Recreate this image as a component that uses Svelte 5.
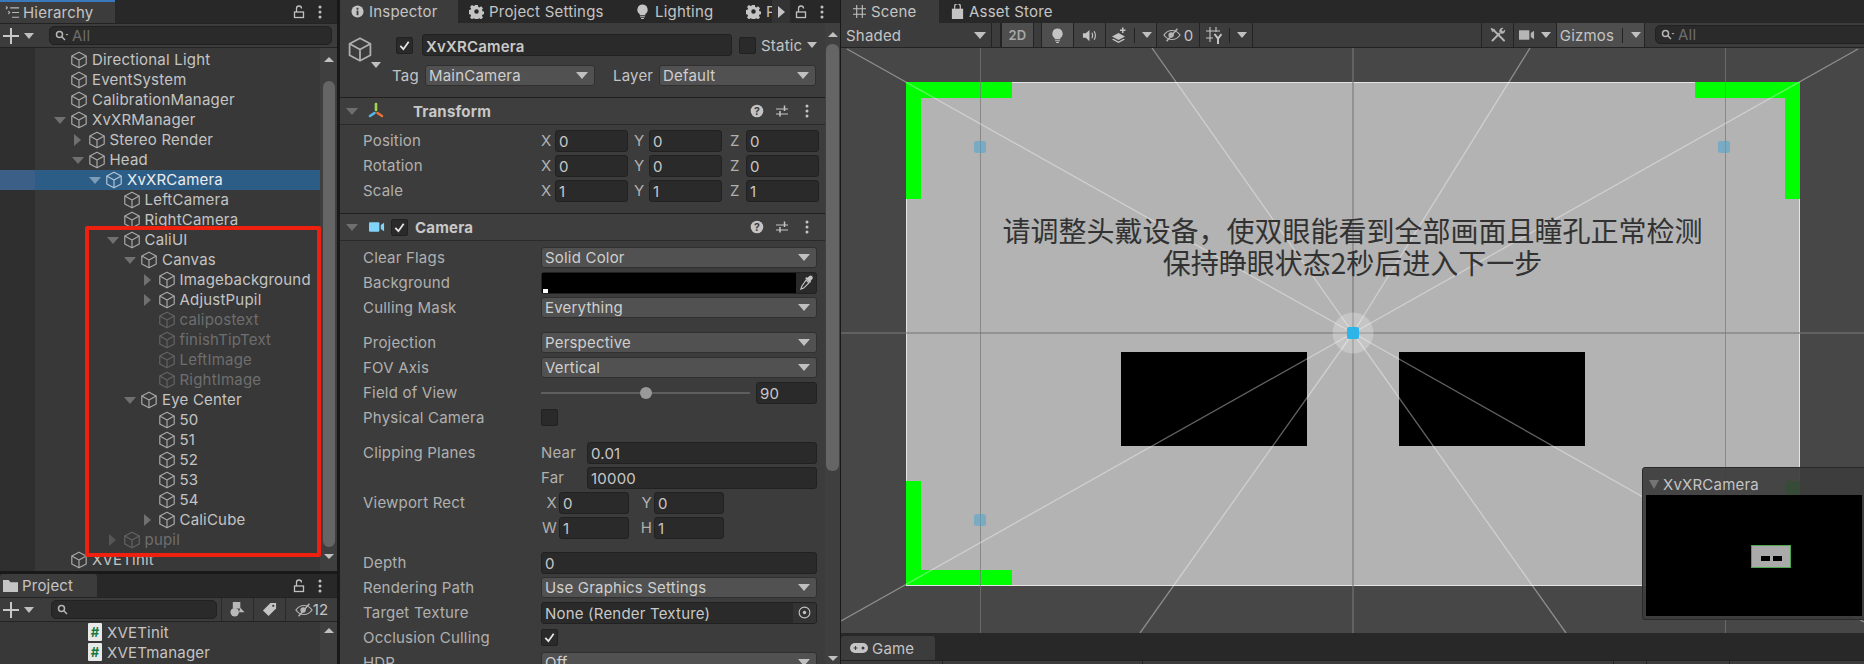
<script>
  const tree = [
    ['Directional Light', 0, ''], ['EventSystem', 0, ''], ['CalibrationManager', 0, ''],
    ['XvXRManager', 0, 'd'], ['Stereo Render', 1, 'r'], ['Head', 1, 'd'],
    ['XvXRCamera', 2, 'd', 'sel'], ['LeftCamera', 3, ''], ['RightCamera', 3, ''],
    ['CaliUI', 3, 'd'], ['Canvas', 4, 'd'], ['Imagebackground', 5, 'r'], ['AdjustPupil', 5, 'r'],
    ['calipostext', 5, '', 'dim'], ['finishTipText', 5, '', 'dim'], ['LeftImage', 5, '', 'dim'], ['RightImage', 5, '', 'dim'],
    ['Eye Center', 4, 'd'], ['50', 5, ''], ['51', 5, ''], ['52', 5, ''], ['53', 5, ''], ['54', 5, ''],
    ['CaliCube', 5, 'r'], ['pupil', 3, 'r', 'dim'], ['XVETinit', 0, '']
  ];
  const transform = [['Position', '0', '0', '0'], ['Rotation', '0', '0', '0'], ['Scale', '1', '1', '1']];
  const center = [1353, 333];
  const rays = [[847, 49], [1858, 49], [841, 621], [1864, 622], [1152, 48], [1530, 48], [1140, 633], [1566, 633]];
  const gridX = [980, 1725];
  const dots = [[980, 147], [1724, 147], [980, 520]];
  const corners = [
    [906, 82, 106, 16], [906, 82, 15, 117], [1695, 82, 105, 16], [1785, 82, 15, 117],
    [906, 481, 15, 104], [906, 570, 106, 15], [1785, 481, 15, 104], [1695, 570, 105, 15]
  ];
</script>

{#snippet cube(cls)}
  <svg class={cls} viewBox="0 0 18 18" fill="none" stroke="currentColor" stroke-width="1.2" stroke-linejoin="round">
    <path d="M9 1.2 16.2 5v8L9 16.8 1.8 13V5z" />
    <path d="M1.8 5 9 9l7.2-4M9 9v7.8" />
  </svg>
{/snippet}
{#snippet lock()}
  <svg class="ico14" viewBox="0 0 14 14" fill="none" stroke="#c0c0c0" stroke-width="1.3">
    <rect x="2.5" y="7" width="9" height="5.5" /><path d="M4.5 7V3.5a2.5 2.5 0 0 1 5 0" />
  </svg>
{/snippet}
{#snippet dotsv()}
  <svg class="ico14" viewBox="0 0 14 14" fill="#c0c0c0"><circle cx="7" cy="2" r="1.5" /><circle cx="7" cy="7" r="1.5" /><circle cx="7" cy="12" r="1.5" /></svg>
{/snippet}
{#snippet gear()}
  <svg class="ico15" viewBox="0 0 16 16" fill="#c4c4c4">
    <path fill-rule="evenodd" d="M6.6 1h2.8l.4 2 1.3.6 1.8-1.1 2 2-1.1 1.8.6 1.3 2 .4v2.8l-2 .4-.6 1.3 1.1 1.8-2 2-1.8-1.1-1.3.6-.4 2H6.6l-.4-2-1.3-.6-1.8 1.1-2-2 1.1-1.8-.6-1.3-2-.4V6.6l2-.4.6-1.3-1.1-1.8 2-2 1.8 1.1 1.3-.6zM8 5.6a2.4 2.4 0 1 0 0 4.8 2.4 2.4 0 0 0 0-4.8z" />
  </svg>
{/snippet}
{#snippet bulb()}
  <svg class="ico15" viewBox="0 0 16 16" fill="#c4c4c4"><path d="M8 .5a5.5 5.5 0 0 0-3 10.1V12h6v-1.4A5.5 5.5 0 0 0 8 .5zM5.5 13h5v1.2h-5zM6.5 14.8h3V16h-3z" /></svg>
{/snippet}
{#snippet plus()}
  <span class="plus"><svg viewBox="0 0 16 16" fill="#c8c8c8"><path d="M7 0h2v7h7v2H9v7H7V9H0V7h7z" /></svg><i class="tri small"></i></span>
{/snippet}
{#snippet lens(more)}
  <svg class="lens" viewBox="0 0 14 12" fill="none" stroke="#b5b5b5" stroke-width="1.5">
    <circle cx="4.5" cy="4.5" r="3" /><path d="M6.8 6.8 10 10" />
    {#if more}<path d="M10.5 4h3l-1.5 1.6z" fill="#b5b5b5" stroke="none" />{/if}
  </svg>
{/snippet}
{#snippet eyeoff()}
  <svg class="eye" viewBox="0 0 20 14" fill="none" stroke="#b5b5b5" stroke-width="1.3">
    <path d="M1 7c2.400-3.500 5.400-5 9-5s6.600 1.500 9 5c-2.400 3.500-5.400 5-9 5S3.400 10.500 1 7z" />
    <circle cx="9" cy="7" r="2.400" fill="#b5b5b5" /><path d="M16 0 4 14" stroke-width="1.600" />
  </svg>
{/snippet}
{#snippet tools()}
  <svg class="ico16" viewBox="0 0 16 16" fill="none" stroke="#b4b4b4" stroke-linecap="round">
    <path d="M3.500 3 14 13.500" stroke-width="2" />
    <path d="M1.500 1.500 4.500 2.800 2.800 4.500z" fill="#b4b4b4" stroke-width="1" />
    <path d="M9.500 6.500 2.500 13.500" stroke-width="2" />
    <path d="M9.300 4.800a3.300 3.300 0 0 1 4.200-3.800l-2 2 1.500 1.500 2-2a3.300 3.300 0 0 1-3.800 4.200z" fill="#b4b4b4" stroke="none" />
  </svg>
{/snippet}
{#snippet headIcons()}
  <div class="head-icons">
    <svg class="ico14" viewBox="0 0 14 14"><circle cx="7" cy="7" r="6.300" fill="#c4c4c4" /><text x="7" y="10.600" class="qm">?</text></svg>
    <svg class="ico14" viewBox="0 0 14 14" fill="none" stroke="#c4c4c4" stroke-width="1.200"><path d="M1 5h12M1 10h12" /><path d="M9.500 1.500V7M5 7v5.500" stroke-width="1.500" /></svg>
    <svg class="ico14" viewBox="0 0 14 14" fill="#c4c4c4"><circle cx="7" cy="2" r="1.500" /><circle cx="7" cy="7" r="1.500" /><circle cx="7" cy="12" r="1.500" /></svg>
  </div>
{/snippet}
{#snippet drop(text)}
  <div class="drop"><span>{text}</span><i class="tri"></i></div>
{/snippet}
{#snippet check(on)}
  <span class="chk">{#if on}<svg viewBox="0 0 14 14" fill="none" stroke="#e8e8e8" stroke-width="1.900"><path d="M2.500 7.500 5.800 11 11.500 3" /></svg>{/if}</span>
{/snippet}
{#snippet scroll(cls)}
  <div class="sb {cls}"><i class="tri up"></i><div class="thumb"></div><i class="tri"></i></div>
{/snippet}

<div class="app">
  <section class="left">
    <div class="hier">
      <div class="tabs">
        <div class="tab hier-tab">
          <svg class="ico15" viewBox="0 0 16 16" fill="none" stroke="#b8b8b8" stroke-width="1.200"><path d="M5.500 3H15M7.500 8H15M7.500 13H15M1 1.500l1.500 1.500L1 4.500M3.500 6.500l1.500 1.500-1.500 1.500" /></svg>
          <span>Hierarchy</span>
        </div>
        <div class="tab-right">{@render lock()}{@render dotsv()}</div>
      </div>
      <div class="bar">
        {@render plus()}
        <div class="search s-hier">{@render lens(true)}<span>All</span></div>
      </div>
      <div class="tree-wrap">
        <div class="tree">
          {#each tree as [name, depth, arrow, flag]}
            <div class="row" class:sel={flag === 'sel'} class:dim={flag === 'dim'} style:padding-left="{51 + 17.5 * depth}px">
              <span class="arrow">{#if arrow}<i class={arrow === 'd' ? 'tri' : 'tri right'}></i>{/if}</span>
              {@render cube('cube')}
              <span class="name">{name}</span>
            </div>
          {/each}
        </div>
        {@render scroll('sb-tree')}
        <div class="redbox"></div>
      </div>
    </div>
    <div class="proj">
      <div class="tabs">
        <div class="tab proj-tab">
          <svg class="ico15" viewBox="0 0 16 16" fill="#c4c4c4"><path d="M0 2h6l2 2.500h8V15H0z" /></svg>
          <span>Project</span>
        </div>
        <div class="tab-right">{@render lock()}{@render dotsv()}</div>
      </div>
      <div class="bar proj-bar">
        {@render plus()}
        <div class="search s-proj">{@render lens(false)}</div>
        <div class="pbtn">
          <svg class="ico15" viewBox="0 0 16 16" fill="#b8b8b8"><rect x="3" y="0" width="8" height="7" /><circle cx="5" cy="11" r="4.500" /><path d="M11 6l4.500 5h-6z" /></svg>
        </div>
        <div class="pbtn">
          <svg class="ico15" viewBox="0 0 16 16" fill="#c4c4c4"><path d="M9 1h6v6l-8 8-6-6z" /><circle cx="12" cy="4" r="1.200" fill="#3c3c3c" /></svg>
        </div>
        <div class="pbtn wide">{@render eyeoff()}<span>12</span></div>
      </div>
      <div class="files">
        <div class="file-list">
          {#each ['XVETinit', 'XVETmanager'] as f}
            <div class="file"><span class="doc">#</span><span>{f}</span></div>
          {/each}
        </div>
        <div class="sb sb-files"><i class="tri up"></i></div>
      </div>
    </div>
  </section>

  <section class="insp">
    <div class="tabs">
      <div class="tab insp-tab">
        <svg class="ico13" viewBox="0 0 14 14"><circle cx="7" cy="7" r="6.500" fill="#c4c4c4" /><rect x="6" y="6" width="2" height="5" fill="#3c3c3c" /><rect x="6" y="3" width="2" height="2" fill="#3c3c3c" /></svg>
        <span>Inspector</span>
      </div>
      <div class="tab plain t-settings">{@render gear()}<span>Project Settings</span></div>
      <div class="tab plain t-light">{@render bulb()}<span>Lighting</span></div>
      <div class="tab plain t-p">{@render gear()}<span>P</span></div>
      <div class="tab-more"><i class="tri right bright"></i></div>
      <div class="tab-right narrow">{@render lock()}{@render dotsv()}</div>
    </div>
    <div class="insp-body">
      <div class="insp-content">
        <div class="obj">
          <div class="obj-icon">
            {@render cube('cube-big')}
            <i class="tri small"></i>
          </div>
          <div class="obj-rows">
            <div class="obj-top">
              {@render check(true)}
              <div class="field name-field">XvXRCamera</div>
              <span class="chk"></span>
              <span class="static">Static</span><i class="tri small"></i>
            </div>
            <div class="obj-bot">
              <span class="tag-label">Tag</span>
              <div class="d-tag">{@render drop('MainCamera')}</div>
              <span class="layer-label">Layer</span>
              <div class="d-layer">{@render drop('Default')}</div>
            </div>
          </div>
        </div>
        <div class="chead">
          <i class="tri dark"></i>
          <svg class="tf-icon" viewBox="0 0 18 18" fill="none" stroke-width="2.600" stroke-linecap="round">
            <path d="M9 2v6" stroke="#a2d64c" /><path d="M7.500 11 3 14" stroke="#55b8e8" /><path d="M10.500 11l4.500 3" stroke="#e8703a" />
          </svg>
          <span class="ctitle tf">Transform</span>
          {@render headIcons()}
        </div>
        <div class="props p-tf">
          {#each transform as [label, x, y, z]}
            <div class="prop">
              <span class="lbl">{label}</span>
              <div class="xyz">
                <span class="ax">X</span><div class="field">{x}</div>
                <span class="ax">Y</span><div class="field">{y}</div>
                <span class="ax">Z</span><div class="field">{z}</div>
              </div>
            </div>
          {/each}
        </div>
        <div class="chead cam">
          <i class="tri dark"></i>
          <svg class="cam-icon" viewBox="0 0 17 12"><rect x="0" y="1" width="11" height="10" rx="1" fill="#80d4fa" /><path d="M12.500 4 16 1.500v9L12.500 8z" fill="#80d4fa" /></svg>
          {@render check(true)}
          <span class="ctitle">Camera</span>
          {@render headIcons()}
        </div>
        <div class="props">
          <div class="prop"><span class="lbl">Clear Flags</span>{@render drop('Solid Color')}</div>
          <div class="prop">
            <span class="lbl">Background</span>
            <div class="color"><div class="swatch"><i></i></div>
              <svg class="ico15" viewBox="0 0 16 16" fill="#c4c4c4"><path d="M10.500 1.500c1-1 2.500-1.200 3.500-.2s.8 2.500-.2 3.500l-1.600 1.600.8.8-1.400 1.400-5-5L8 2.200l.8.8z" /><path d="M7.500 5.500l3 3L5 14l-3 1 1-3z" fill="none" stroke="#c4c4c4" stroke-width="1.200" /></svg>
            </div>
          </div>
          <div class="prop"><span class="lbl">Culling Mask</span>{@render drop('Everything')}</div>
          <div class="gap"></div>
          <div class="prop"><span class="lbl">Projection</span>{@render drop('Perspective')}</div>
          <div class="prop"><span class="lbl">FOV Axis</span>{@render drop('Vertical')}</div>
          <div class="prop">
            <span class="lbl">Field of View</span>
            <div class="slider"><div class="track"></div><div class="knob"></div></div>
            <div class="field f-fov">90</div>
          </div>
          <div class="prop"><span class="lbl">Physical Camera</span>{@render check(false)}</div>
          <div class="gap"></div>
          <div class="prop">
            <span class="lbl">Clipping Planes</span>
            <span class="np">Near</span><div class="field grow">0.01</div>
          </div>
          <div class="prop">
            <span class="lbl"></span>
            <span class="np">Far</span><div class="field grow">10000</div>
          </div>
          <div class="prop">
            <span class="lbl">Viewport Rect</span>
            <div class="vp"><span class="ax vx">X</span><div class="field">0</div><span class="ax vy">Y</span><div class="field">0</div></div>
          </div>
          <div class="prop">
            <span class="lbl"></span>
            <div class="vp"><span class="ax vx">W</span><div class="field">1</div><span class="ax vy">H</span><div class="field">1</div></div>
          </div>
          <div class="gap"></div>
          <div class="prop"><span class="lbl">Depth</span><div class="field grow">0</div></div>
          <div class="prop"><span class="lbl">Rendering Path</span>{@render drop('Use Graphics Settings')}</div>
          <div class="prop">
            <span class="lbl">Target Texture</span>
            <div class="field grow objf"><span>None (Render Texture)</span>
              <b class="pick"><svg class="ico13" viewBox="0 0 14 14" fill="none" stroke="#c4c4c4" stroke-width="1.200"><circle cx="7" cy="7" r="5.800" /><circle cx="7" cy="7" r="1.800" fill="#c4c4c4" stroke="none" /></svg></b>
            </div>
          </div>
          <div class="prop"><span class="lbl">Occlusion Culling</span>{@render check(true)}</div>
          <div class="prop"><span class="lbl">HDR</span>{@render drop('Off')}</div>
        </div>
      </div>
      {@render scroll('sb-insp')}
    </div>
  </section>

  <section class="scene">
    <div class="tabs">
      <div class="tab scene-tab">
        <svg class="ico13" viewBox="0 0 14 14" fill="none" stroke="#c0c0c0" stroke-width="1.200"><path d="M4 0v14M10 0v14M0 4h14M0 10h14" /></svg>
        <span>Scene</span>
      </div>
      <div class="tab plain t-store">
        <svg class="ico15" viewBox="0 0 14 16" fill="#c4c4c4"><path d="M1 5h12v11H1z" /><path d="M4 6V2.500a3 3 0 0 1 6 0V6" fill="none" stroke="#c4c4c4" stroke-width="1.300" /></svg>
        <span>Asset Store</span>
      </div>
    </div>
    <div class="scene-bar">
      <div class="sbtn shaded"><span>Shaded</span><i class="tri"></i></div>
      <div class="sgap"></div>
      <div class="sbtn lit b2d">2D</div>
      <div class="sgap sm"></div>
      <div class="sbtn lit bicon">{@render bulb()}</div>
      <div class="sbtn bicon lit2">
        <svg class="ico15" viewBox="0 0 16 16" fill="#c4c4c4" ><path d="M1 5.500h3L8 2v12l-4-3.500H1z" /><path d="M10.500 5c1 1.800 1 4.200 0 6M13 3.500c1.600 2.800 1.600 6.200 0 9" fill="none" stroke="#c4c4c4" stroke-width="1.200" /></svg>
      </div>
      <div class="sbtn bfx lit2">
        <svg class="ico16" viewBox="0 0 16 16" fill="#c4c4c4"><path d="M1 9.500 7.500 6 14 9.500 7.500 13zM1 12.500l1.500-.8 5 2.700 5-2.700 1.500.8-6.500 3.500zM11 .500h1.500V2.500h2V4h-2v2H11V4H9V2.500h2z" /></svg>
        <em class="vr"></em><i class="tri small"></i>
      </div>
      <div class="sbtn bhid">{@render eyeoff()}<span>0</span></div>
      <div class="sbtn bgrid">
        <svg class="gridy" viewBox="0 0 16 17" fill="none" stroke="#c4c4c4" stroke-width="1.100"><path d="M4 0v15M10 0v5M0 4h14M0 11h7" /><path d="M8.500 7 12 11.500l3.500-4.500M12 11.500V17" stroke-width="2" /></svg>
        <em class="vr"></em><i class="tri small"></i>
      </div>
      <div class="spring"></div>
      <div class="sbtn btool">{@render tools()}</div>
      <div class="sbtn bcam">
        <svg class="camg" viewBox="0 0 17 12" fill="#b5b5b5"><rect y="1" width="11" height="10" /><path d="M12.500 4 16 1.500v9L12.500 8z" /></svg>
        <i class="tri small"></i>
      </div>
      <div class="sbtn lit bgiz"><span>Gizmos</span><em class="vr"></em><i class="tri small"></i></div>
      <div class="search s-scene">{@render lens(true)}<span>All</span></div>
    </div>
    <div class="view">
      <svg class="world" viewBox="841 48 1023 585" width="1023" height="585">
        <rect x="906.500" y="82.500" width="893" height="503" fill="#b3b3b3" stroke="#e4e4e4" />
        {#each corners as [x, y, w, h]}<rect {x} {y} width={w} height={h} fill="#00ff00" />{/each}
        <rect x="1121" y="352" width="186" height="94" fill="#000" />
        <rect x="1399" y="352" width="186" height="94" fill="#000" />
        {#each gridX as x}<line x1={x + 0.5} x2={x + 0.5} y1="48" y2="633" stroke="#777" stroke-opacity=".7" />{/each}
        <line x1="1353" x2="1353" y1="48" y2="633" stroke="#777" stroke-opacity=".55" stroke-width="2" />
        <line x1="841" x2="1864" y1="333" y2="333" stroke="#777" stroke-opacity=".55" stroke-width="2" />
        {#each rays as [x, y]}<line x1={center[0]} y1={center[1]} x2={x} y2={y} stroke="#fff" stroke-opacity=".38" stroke-width="1.300" />{/each}
        <circle cx={center[0]} cy={center[1]} r="20.500" fill="#fff" fill-opacity=".24" />
        <rect x="1347" y="327" width="12" height="12" rx="2" fill="#2db4e8" />
        {#each dots as [x, y]}<rect x={x - 6} y={y - 6} width="12" height="12" rx="2.500" fill="#4aa4d0" fill-opacity=".55" />{/each}
      </svg>
      <div class="screen-text">
        <div>请调整头戴设备，使双眼能看到全部画面且瞳孔正常检测</div>
        <div>保持睁眼状态2秒后进入下一步</div>
      </div>
      <div class="preview">
        <div class="pv-title"><i class="tri pv-tri"></i><span>XvXRCamera</span></div>
        <div class="pv-body">
          <div class="mini"><i></i><i></i></div>
        </div>
      </div>
    </div>
    <div class="game">
      <div class="tabs game-tabs">
        <div class="tab game-tab">
          <svg class="pad" viewBox="0 0 18 12" fill="#c4c4c4"><rect y="1" width="18" height="10" rx="5" /><path d="M3.500 5.500h4v1h-4z" fill="#3c3c3c" /><path d="M5 4h1v4H5z" fill="#3c3c3c" /><circle cx="13" cy="6" r="1.500" fill="#3c3c3c" /></svg>
          <span>Game</span>
        </div>
      </div>
      <div class="game-bar"><em></em><em></em><em></em><em></em><em></em></div>
    </div>
  </section>
</div>

<style>
  :global(body) { margin: 0; background: #191919; }
  .app {
    display: flex; width: 1864px; height: 664px; overflow: hidden; gap: 3px;
    font: 15px Inter, "Noto Sans", sans-serif; letter-spacing: 0.2px; color: #c4c4c4; background: #191919;
  }
  svg { display: block; flex: none; }
  i { display: block; flex: none; }
  .ico13 { width: 13px; height: 13px; }
  .ico14 { width: 14px; height: 14px; }
  .ico15 { width: 15px; height: 15px; }
  .ico16 { width: 16px; height: 16px; }
  .gridy { width: 16px; height: 17px; }
  .lens { width: 14px; height: 12px; }
  .eye { width: 18px; height: 14px; }
  .tri { width: 0; height: 0; border-left: 6px solid transparent; border-right: 6px solid transparent; border-top: 7px solid #c0c0c0; }
  .tri.small { border-left-width: 5px; border-right-width: 5px; border-top-width: 6px; }
  .tri.up { border-top: 0; border-bottom: 6px solid #c0c0c0; border-left-width: 5px; border-right-width: 5px; }
  .tri.right { border: 0 solid transparent; border-top-width: 6px; border-bottom-width: 6px; border-left: 7px solid #707070; }
  .tri.bright { border-left-color: #c4c4c4; }
  .tri.dark { border-top-color: #6e6e6e; }

  .tabs { display: flex; height: 23px; background: #282828; flex: none; align-items: stretch; }
  .tab { display: flex; align-items: center; gap: 5px; flex: none; padding-left: 5px; box-sizing: border-box; background: #3c3c3c; }
  .tab.plain { background: none; }
  .tab-right { margin-left: auto; display: flex; align-items: center; gap: 7px; padding-right: 10px; }

  .left { width: 337px; flex: none; display: flex; flex-direction: column; }
  .hier { height: 571px; flex: none; display: flex; flex-direction: column; background: #383838; }
  .hier-tab { width: 115px; border-top: 2px solid #3a79bb; gap: 3px; }
  .bar { height: 25px; display: flex; align-items: center; background: #3c3c3c; border-top: 1px solid #232323; border-bottom: 1px solid #232323; box-sizing: border-box; flex: none; }
  .plus { display: flex; align-items: center; gap: 5px; padding-left: 3px; width: 47px; box-sizing: border-box; }
  .plus svg { width: 16px; height: 16px; }
  .search { display: flex; align-items: center; gap: 3px; height: 19px; border-radius: 5px; background: #2a2a2a; border: 1px solid #212121; box-sizing: border-box; padding-left: 5px; color: #6d6d6d; }
  .s-hier { width: 283px; margin-left: 2px; }

  .tree-wrap { position: relative; flex: 1; display: flex; overflow: hidden; min-height: 0; }
  .tree { width: 320px; flex: none; padding-top: 2px; background: linear-gradient(to right, #2f2f2f 35px, #383838 35px); }
  .row { height: 20px; display: flex; align-items: center; color: #c4c4c4; box-sizing: border-box; }
  .row.sel { background: linear-gradient(to right, #3c5f87 35px, #2c5d87 35px); color: #ececec; }
  .row.dim { color: #6e6e6e; }
  .row.sel .tri { border-top-color: #7c9cb8; }
  .arrow { width: 18px; flex: none; display: flex; justify-content: center; }
  .arrow .tri:not(.right) { border-top-color: #707070; }
  .row.sel .arrow .tri { border-top-color: #7c9cb8; }
  .row.dim .tri.right { border-left-color: #565656; }
  .cube { width: 18px; height: 18px; margin: 0 1px; color: #a8a8a8; }
  .row.dim .cube { color: #636363; }
  .row.sel .cube { color: #b4c4d4; }
  .name { margin: -1px 0 0 3px; white-space: nowrap; }
  .redbox { position: absolute; left: 85px; top: 178px; width: 236px; height: 331px; border: 4px solid #f0200f; border-radius: 2px; box-sizing: border-box; }

  .sb { display: flex; flex-direction: column; align-items: center; background: #3f3f3f; box-sizing: border-box; padding-top: 9px; }
  .sb .tri { border-left-width: 5px; border-right-width: 5px; border-top-width: 5px; }
  .sb .tri.up { border-bottom-width: 5px; border-top-width: 0; }
  .thumb { width: 12px; background: #656565; border-radius: 6px; flex: none; }
  .sb-tree { width: 17px; }
  .sb-tree .thumb { height: 466px; margin: 19px 0 7px; }
  .sb-insp { width: 15px; }
  .sb-insp .thumb { height: 427px; margin: 7px 0 185px; width: 13px; }
  .sb-files { width: 17px; }

  .proj { flex: 1; display: flex; flex-direction: column; background: #383838; min-height: 0; margin-top: 3px; }
  .proj-tab { width: 97px; border-radius: 3px 3px 0 0; gap: 4px; padding-left: 3px; }
  .s-proj { width: 166px; margin-left: 4px; }
  .pbtn { width: 32px; height: 100%; display: flex; align-items: center; justify-content: center; border-left: 1px solid #2a2a2a; box-sizing: border-box; }
  .s-proj + .pbtn { margin-left: 4px; }
  .pbtn.wide { flex: 1; gap: 0; }
  .files { flex: 1; display: flex; min-height: 0; overflow: hidden; }
  .file-list { width: 320px; flex: none; }
  .file { height: 20px; display: flex; align-items: center; gap: 5px; padding-left: 88px; }
  .doc { width: 14px; height: 18px; background: #e8e8e8; color: #1c7a3c; font-weight: 700; font-size: 13px; line-height: 18px; text-align: center; border-radius: 1px; letter-spacing: 0; }
  .sb-files { padding-top: 6px; }

  .insp { width: 500px; flex: none; display: flex; flex-direction: column; background: #3c3c3c; margin-right: -2px; }
  .insp-tab { width: 118px; padding-left: 11px; gap: 5px; }
  .t-settings { margin-left: 11px; width: 166px; padding-left: 0; }
  .t-light { width: 111px; padding-left: 0; }
  .t-p { width: 26px; padding-left: 0; overflow: hidden; gap: 5px; }
  .tab-more { width: 18px; background: #333; display: flex; align-items: center; justify-content: center; flex: none; }
  .tab-right.narrow { padding-right: 11px; }
  .insp-body { flex: 1; display: flex; min-height: 0; overflow: hidden; }
  .insp-content { width: 485px; flex: none; }

  .obj { height: 74px; display: flex; border-bottom: 1px solid #1f1f1f; }
  .obj-icon { width: 56px; flex: none; position: relative; }
  .cube-big { width: 26px; height: 27px; position: absolute; left: 7px; top: 13px; color: #b0b0b0; }
  .obj-icon .tri { position: absolute; left: 31px; top: 39px; }
  .obj-rows { flex: 1; padding-top: 11px; padding-right: 8px; min-width: 0; }
  .obj-top { display: flex; align-items: center; height: 22px; }
  .obj-top .chk { margin-right: 9px; }
  .obj-top .field { margin-right: 7px; }
  .name-field { width: 310px; flex: none; font-weight: 600; color: #d8d8d8; }
  .static { margin-left: -4px; margin-right: 5px; }
  .obj-bot { display: flex; align-items: center; height: 21px; margin-top: 9px; margin-left: -4px; }
  .tag-label { width: 33px; flex: none; }
  .d-tag { width: 170px; flex: none; display: flex; }
  .layer-label { margin-left: 18px; width: 46px; flex: none; }
  .d-layer { width: 157px; flex: none; display: flex; }

  .chead { height: 26px; display: flex; align-items: center; border-bottom: 1px solid #2a2a2a; padding-left: 6px; background: #3e3e3e; }
  .chead .tri { margin-right: 9px; }
  .tf-icon { width: 18px; height: 18px; }
  .ctitle { font-weight: 700; margin-left: 7px; color: #c8c8c8; }
  .ctitle.tf { margin-left: 28px; }
  .cam .chk { margin-left: 6px; }
  .cam-icon { width: 16px; height: 12px; margin-left: 2px; }
  .head-icons { margin-left: auto; display: flex; gap: 11px; padding-right: 11px; }
  .qm { font: 700 10.500px Inter, sans-serif; fill: #3c3c3c; text-anchor: middle; }

  .props { padding: 4px 8px 8px 23px; border-bottom: 1px solid #1f1f1f; }
  .p-tf { padding-top: 3px; padding-bottom: 10px; }
  .prop { height: 25px; display: flex; align-items: center; }
  .lbl { width: 178px; flex: none; color: #b0b0b0; white-space: nowrap; }
  .gap { height: 10px; }
  .xyz { flex: 1; display: flex; align-items: center; }
  .ax { width: 14px; flex: none; color: #b0b0b0; }
  .xyz .field { width: 73px; flex: none; margin-right: 6px; }
  .xyz .field:last-child { margin-right: 0; }
  .xyz .ax:nth-child(3) { width: 15px; }
  .xyz .ax:nth-child(5) { width: 16px; margin-left: 2px; }
  .field { height: 22px; box-sizing: border-box; background: #2a2a2a; border: 1px solid #212121; border-radius: 3px; color: #c8c8c8; padding: 2px 0 0 3px; display: flex; align-items: center; white-space: nowrap; overflow: hidden; }
  .field.grow { flex: 1; }
  .drop { flex: 1; height: 21px; box-sizing: border-box; background: #515151; border: 1px solid #303030; border-radius: 3px; display: flex; align-items: center; justify-content: space-between; padding: 0 6px 1px 3px; color: #cfcfcf; }
  .drop .tri { margin-top: 1px; }
  .chk { width: 17px; height: 17px; box-sizing: border-box; background: #2a2a2a; border: 1px solid #212121; border-radius: 2px; display: flex; align-items: center; justify-content: center; flex: none; }
  .chk svg { width: 13px; height: 13px; }

  .color { flex: 1; height: 22px; display: flex; align-items: center; background: #2a2a2a; border: 1px solid #212121; border-radius: 3px; box-sizing: border-box; }
  .swatch { width: 254px; height: 20px; background: #000; position: relative; flex: none; }
  .swatch i { position: absolute; left: 1px; bottom: 0; width: 5px; height: 4px; background: #fff; }
  .color svg { margin-left: 3px; }

  .slider { width: 209px; flex: none; position: relative; height: 14px; }
  .track { position: absolute; left: 0; right: 0; top: 6px; height: 2px; background: #5e5e5e; }
  .knob { position: absolute; left: 99px; top: 1px; width: 12px; height: 12px; border-radius: 50%; background: #999; }
  .f-fov { width: 61px; margin-left: 6px; flex: none; }
  .np { width: 46px; flex: none; color: #b0b0b0; }
  .vp { display: flex; align-items: center; }
  .vp .field { width: 70px; flex: none; }
  .vp .ax { text-align: right; padding-right: 2px; box-sizing: border-box; }
  .vx { width: 18px !important; }
  .vy { width: 25px !important; }
  .objf { justify-content: space-between; padding: 2px 0 0 3px; }
  .pick { width: 23px; height: 22px; margin-top: -2px; background: #333; display: flex; align-items: center; justify-content: center; flex: none; }

  .scene { flex: 1; min-width: 0; display: flex; flex-direction: column; }
  .scene-tab { width: 98px; padding-left: 12px; gap: 5px; }
  .t-store { padding-left: 11px; gap: 4px; }
  .scene-bar { height: 25px; display: flex; align-items: stretch; background: #3c3c3c; border-bottom: 1px solid #232323; box-sizing: border-box; flex: none; }
  .sbtn { display: flex; align-items: center; justify-content: center; border-right: 1px solid #232323; box-sizing: border-box; flex: none; }
  .lit { background: #4e4e4e; }
  .lit2 { background: #434343; }
  .shaded { width: 151px; justify-content: space-between; padding: 0 5px; }
  .sgap { width: 8px; border-right: 1px solid #232323; flex: none; }
  .sgap.sm { width: 7px; }
  .b2d { width: 33px; color: #a8a8a8; font-size: 13px; font-weight: 600; border-left: 1px solid #232323; }
  .bicon { width: 32px; }
  .bfx { width: 51px; gap: 7px; }
  .bhid { width: 43px; gap: 3px; }
  .bgrid { width: 53px; gap: 7px; }
  .vr { width: 1px; height: 15px; background: #222; display: block; }
  .spring { flex: 1; }
  .btool { width: 33px; border-left: 1px solid #232323; }
  .bcam { width: 43px; gap: 6px; }
  .camg { width: 16px; height: 12px; }
  .bgiz { width: 88px; gap: 8px; }
  .s-scene { flex: none; width: 230px; margin: 2px -21px 0 10px; }

  .view { position: relative; flex: 1; background: #474747; overflow: hidden; min-height: 0; }
  .world { position: absolute; left: 0; top: 0; }
  .screen-text { position: absolute; left: 65px; width: 893px; top: 166px; text-align: center; color: #323232; font: 28px/32px "Noto Sans CJK SC", sans-serif; letter-spacing: 0; }
  .preview { position: absolute; right: -2px; top: 419px; width: 224px; height: 153px; background: rgba(60, 60, 60, .93); border: 1px solid #2a2a2a; border-radius: 3px; box-sizing: border-box; padding: 0 3px 3px; display: flex; flex-direction: column; }
  .pv-title { height: 27px; display: flex; align-items: center; gap: 4px; flex: none; padding-top: 5px; box-sizing: border-box; }
  .pv-tri { border-top-color: #757575; border-left-width: 5px; border-right-width: 5px; border-top-width: 9px; margin-left: 3px; }
  .pv-body { flex: 1; background: #000; position: relative; }
  .mini { position: absolute; left: 105px; top: 50px; width: 40px; height: 23px; background: #aaa; border: 1px solid #4da84d; box-sizing: border-box; display: flex; gap: 3px; align-items: center; justify-content: center; padding-top: 3px; }
  .mini i { width: 9px; height: 5px; background: #000; }
  .game { flex: none; height: 31px; display: flex; flex-direction: column; background: #282828; }
  .game-tabs { height: 27px; padding-top: 3px; box-sizing: border-box; }
  .game-tab { width: 94px; padding-left: 9px; gap: 4px; border-radius: 3px 3px 0 0; }
  .pad { width: 18px; height: 12px; }
  .game-bar { flex: 1; background: #3c3c3c; border-top: 1px solid #232323; display: flex; }
  .game-bar em { display: block; width: 1px; background: #232323; }
  .game-bar em:nth-child(1) { margin-left: 101px; }
  .game-bar em:nth-child(2) { margin-left: 199px; }
  .game-bar em:nth-child(3) { margin-left: 470px; }
  .game-bar em:nth-child(4) { margin-left: 32px; }
  .game-bar em:nth-child(5) { margin-left: 82px; }
</style>
